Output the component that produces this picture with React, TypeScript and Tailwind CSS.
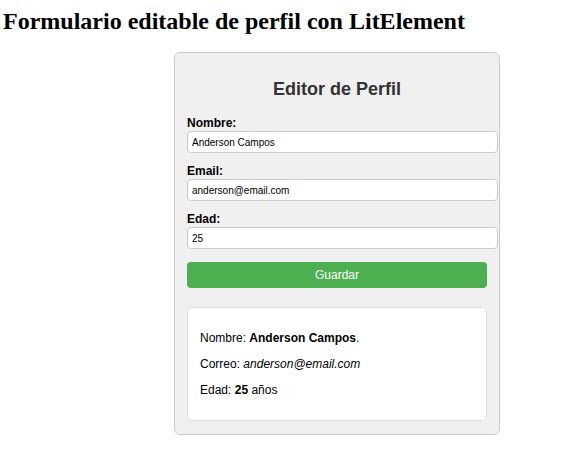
import { useState } from "react";

const App = () => {
  const [nombre, setNombre] = useState("Anderson Campos");
  const [email, setEmail] = useState("anderson@email.com");
  const [edad, setEdad] = useState("25");

  return (
    <div className="w-[575px] h-[452px] bg-white overflow-hidden">
      <h1 className="pl-[3px] pt-[7px] text-[24px] leading-[28px] font-bold text-black font-['Liberation_Serif',serif]">
        Formulario editable de perfil con LitElement
      </h1>

      <div className="ml-[174px] mt-[17px] w-[326px] bg-[#f0f0f0] border border-[#cccccc] rounded-[6px] px-[12px] pt-[26px] pb-[13px] font-['Liberation_Sans',Arial,sans-serif]">
        <h2 className="text-center text-[18px] leading-[21px] font-bold text-[#333333] mb-[16px]">
          Editor de Perfil
        </h2>

        <label className="block text-[12px] leading-[14px] font-bold text-black mb-[1px]">
          Nombre:
        </label>
        <input
          type="text"
          value={nombre}
          onChange={(e) => setNombre(e.target.value)}
          className="block w-[311px] h-[22px] px-[4px] text-[10px] text-black bg-white border border-[#cccccc] rounded-[4px] mb-[11px] outline-none"
        />

        <label className="block text-[12px] leading-[14px] font-bold text-black mb-[1px]">
          Email:
        </label>
        <input
          type="email"
          value={email}
          onChange={(e) => setEmail(e.target.value)}
          className="block w-[311px] h-[22px] px-[4px] text-[10px] text-black bg-white border border-[#cccccc] rounded-[4px] mb-[11px] outline-none"
        />

        <label className="block text-[12px] leading-[14px] font-bold text-black mb-[1px]">
          Edad:
        </label>
        <input
          type="number"
          value={edad}
          onChange={(e) => setEdad(e.target.value)}
          className="block w-[311px] h-[22px] px-[4px] text-[10px] text-black bg-white border border-[#cccccc] rounded-[4px] outline-none"
        />

        <button
          type="button"
          className="block w-[300px] h-[26px] mt-[13px] bg-[#4caf50] text-white text-[12px] rounded-[4px]"
        >
          Guardar
        </button>

        <div className="mt-[19px] w-[300px] bg-white border border-[#dddddd] rounded-[4px] px-[12px] pt-[23px] pb-[23px] flex flex-col gap-[12px] text-[12px] leading-[14px] text-black">
          <p>
            Nombre: <strong>{nombre}</strong>.
          </p>
          <p>
            Correo: <em>{email}</em>
          </p>
          <p>
            Edad: <strong>{edad}</strong> años
          </p>
        </div>
      </div>
    </div>
  );
};

export default App;
